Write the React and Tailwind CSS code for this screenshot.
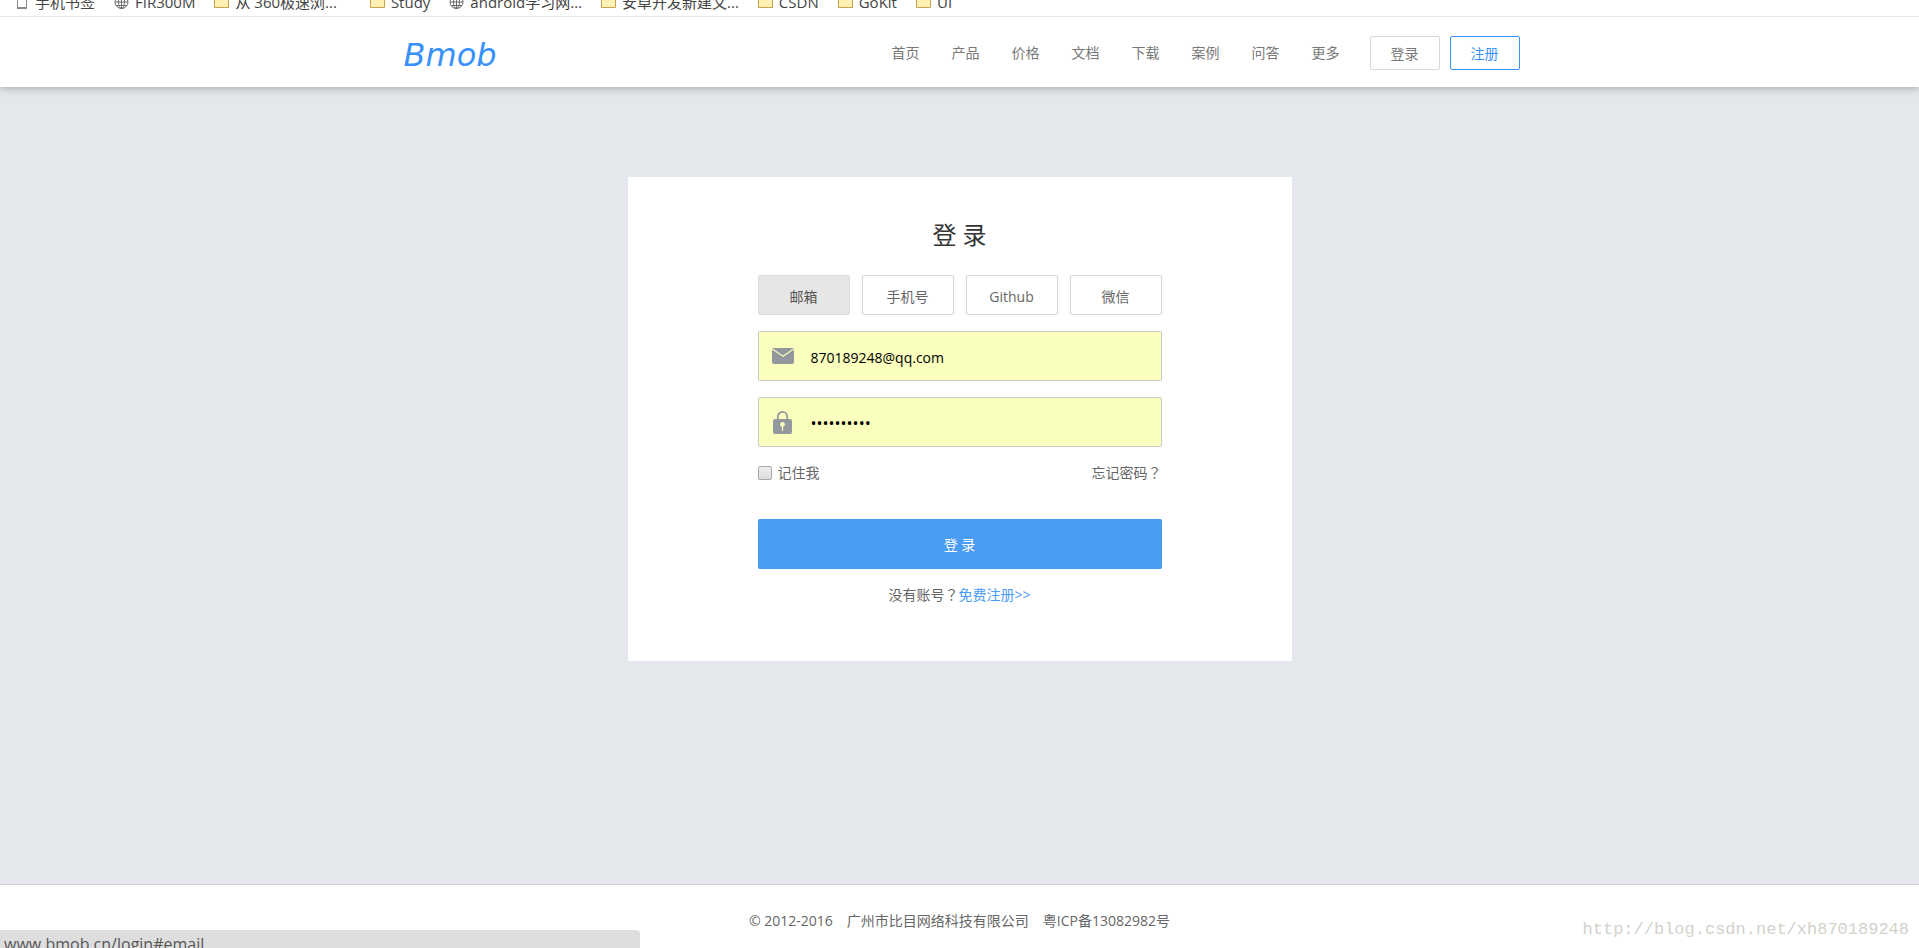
import { useState } from 'react'

const BOOKMARKS = [
  { icon: 'phone', label: '手机书签' },
  { icon: 'globe', label: 'FIR300M' },
  { icon: 'folder', label: '从 360极速浏...', wide: true },
  { icon: 'folder', label: 'Study' },
  { icon: 'globe', label: 'android学习网...' },
  { icon: 'folder', label: '安卓开发新建文...' },
  { icon: 'folder', label: 'CSDN' },
  { icon: 'folder', label: 'GoKit' },
  { icon: 'folder', label: 'UI' },
]

const NAV = ['首页', '产品', '价格', '文档', '下载', '案例', '问答', '更多']

const TABS = ['邮箱', '手机号', 'Github', '微信']

function BookmarkIcon({ type }) {
  if (type === 'phone') {
    return (
      <svg width="13" height="16" viewBox="0 0 13 16" fill="none" className="shrink-0">
        <rect x="1.5" y="0.5" width="9" height="14" rx="0.5" stroke="#8a8a8a" />
        <path d="M1 14h10" stroke="#8a8a8a" strokeWidth="2" />
      </svg>
    )
  }
  if (type === 'globe') {
    return (
      <svg width="15" height="16" viewBox="0 0 15 16" fill="none" stroke="#6a6a6a" className="shrink-0">
        <circle cx="7.5" cy="8" r="6.5" />
        <ellipse cx="7.5" cy="8" rx="3" ry="6.5" />
        <path d="M1 8h13M2 4.5h11M2 11.5h11M7.5 1.5v13" />
      </svg>
    )
  }
  return (
    <svg width="15" height="16" viewBox="0 0 15 16" className="shrink-0">
      <path d="M0.5 0.5h6l1 2h7v11h-14z" fill="#fff1b3" stroke="#c9a24a" />
    </svg>
  )
}

function MailIcon() {
  return (
    <svg width="22" height="16" viewBox="0 0 22 16" className="shrink-0">
      <path d="M1 0h20a1 1 0 0 1 1 1v13a2 2 0 0 1-2 2H2a2 2 0 0 1-2-2V1a1 1 0 0 1 1-1z" fill="#92989e" />
      <path d="M0 0.8l11 7.4 11-7.4" fill="none" stroke="#faffbd" strokeWidth="1.2" />
    </svg>
  )
}

function LockIcon() {
  return (
    <svg width="19" height="23" viewBox="0 0 19 23" className="shrink-0">
      <path d="M4.8 9V5.6a4.7 4.7 0 0 1 9.4 0V9" fill="none" stroke="#92989e" strokeWidth="1.8" />
      <rect y="8" width="19" height="15" rx="2" fill="#92989e" />
      <circle cx="9.5" cy="13.5" r="2.4" fill="#faffbd" />
      <path d="M9.5 14v6" stroke="#faffbd" strokeWidth="1.2" />
    </svg>
  )
}

function Field({ id, label, icon, type, value, onChange }) {
  return (
    <div className="mt-4 flex h-[50px] items-center rounded-xs border border-[#c9c9c9] bg-[#faffbd]">
      <label htmlFor={id} aria-label={label} className="flex w-12 justify-center">
        {icon}
      </label>
      <input
        id={id}
        type={type}
        value={value}
        onChange={onChange}
        className={`h-full min-w-0 flex-1 bg-transparent pt-[2px] pl-1 text-black outline-none ${
          type === 'password' ? 'text-base' : 'text-sm'
        }`}
      />
    </div>
  )
}

// full-width question mark, centred in its box
function QuestionMark() {
  return <span className="font-['Noto_Sans_CJK_TC',sans-serif] leading-none" lang="zh-TW">？</span>
}

export default function App() {
  const [tab, setTab] = useState('邮箱')
  const [email, setEmail] = useState('870189248@qq.com')
  const [password, setPassword] = useState('bmob123456')
  const [remember, setRemember] = useState(false)

  return (
    <div className="relative flex min-h-screen flex-col bg-[#e4e8ec] font-['Open_Sans','Noto_Sans_CJK_SC',sans-serif] text-sm leading-5 text-[#666]">

      {/* Bookmarks */}
      <div className="relative z-20 flex h-[17px] items-end gap-[19px] overflow-hidden border-b border-[#e5e5e5] bg-white pb-[2px] pl-4 text-[15px] leading-6 text-[#444]">
        {BOOKMARKS.map((b) => (
          <a
            key={b.label}
            href="#"
            className={`flex shrink-0 items-center gap-[6px] whitespace-nowrap ${b.wide ? 'pr-[14px]' : ''}`}
          >
            <BookmarkIcon type={b.icon} />
            {b.label}
          </a>
        ))}
      </div>

      {/* Header */}
      <header className="z-10 bg-white shadow-[0_1px_8px_rgba(0,0,0,0.3)]">
        <div className="mx-auto flex h-[70px] max-w-[1120px] items-center justify-between pt-[2px]">
          <a href="#" className="pt-1 pl-1 font-['DejaVu_Sans',sans-serif] text-[32px] leading-10 italic text-[#3891fb]">
            Bmob
          </a>
          <div className="flex items-center">
            <nav className="flex gap-8 pr-[30px] text-[#777]">
              {NAV.map((item) => (
                <a key={item} href="#">{item}</a>
              ))}
            </nav>
            <div className="flex gap-[10px]">
              <button type="button" className="h-[34px] w-[70px] rounded-xs border border-[#d9d9d9] pt-[2px] text-[#777]">
                登录
              </button>
              <button type="button" className="h-[34px] w-[70px] rounded-xs border border-[#3891fb] pt-[2px] text-[#3891fb]">
                注册
              </button>
            </div>
          </div>
        </div>
      </header>

      {/* Login card */}
      <main className="flex-1 px-4 py-[90px]">
        <div className="mx-auto max-w-[664px] bg-white px-4 pt-[42px] pb-14">
          <form className="mx-auto max-w-[404px]" onSubmit={(e) => e.preventDefault()}>
            <h1 className="text-center text-2xl text-[#333]">登 录</h1>

            <div className="mt-6 grid grid-cols-4 gap-3">
              {TABS.map((t) => (
                <button
                  key={t}
                  type="button"
                  onClick={() => setTab(t)}
                  className={`h-10 rounded-xs border pt-[3px] ${
                    tab === t ? 'border-[#dcdcdc] bg-[#e6e6e6] text-[#555]' : 'border-[#d4d4d4] bg-white'
                  }`}
                >
                  {t}
                </button>
              ))}
            </div>

            <Field
              id="email"
              label="邮箱"
              type="text"
              icon={<MailIcon />}
              value={email}
              onChange={(e) => setEmail(e.target.value)}
            />
            <Field
              id="password"
              label="密码"
              type="password"
              icon={<LockIcon />}
              value={password}
              onChange={(e) => setPassword(e.target.value)}
            />

            <div className="mt-4 flex items-center justify-between">
              <label className="flex items-center gap-[6px]">
                <input
                  type="checkbox"
                  checked={remember}
                  onChange={(e) => setRemember(e.target.checked)}
                  className="size-[14px] appearance-none rounded-xs border border-[#a8a8a8] bg-linear-to-b from-[#eee] to-[#dcdcdc] checked:bg-[#4a9bf3]"
                />
                记住我
              </label>
              <a href="#">忘记密码<QuestionMark /></a>
            </div>

            <button type="submit" className="mt-9 h-[50px] w-full rounded-xs bg-[#4a9bf3] pt-[2px] text-white">
              登 录
            </button>

            <p className="mt-4 text-center">
              没有账号<QuestionMark /><a href="#" className="text-[#4a9bf3]">免费注册&gt;&gt;</a>
            </p>
          </form>
        </div>
      </main>

      {/* Footer */}
      <footer className="flex justify-center gap-[14px] border-t border-[#d0d0d0] bg-white pt-[26px] pb-[17px]">
        <span>© 2012-2016</span>
        <span>广州市比目网络科技有限公司</span>
        <span>粤ICP备13082982号</span>
      </footer>

      {/* Link preview */}
      <div className="absolute bottom-0 left-0 h-[18px] w-1/3 overflow-hidden rounded-tr-sm bg-[#dedede] pl-1 text-base leading-7 text-[#555]">
        www.bmob.cn/login#email
      </div>

      <div className="absolute right-[10px] bottom-2 font-['Liberation_Mono',monospace] text-[17px] leading-5 text-[#d2d2ca]">
        http://blog.csdn.net/xh870189248
      </div>

    </div>
  )
}
